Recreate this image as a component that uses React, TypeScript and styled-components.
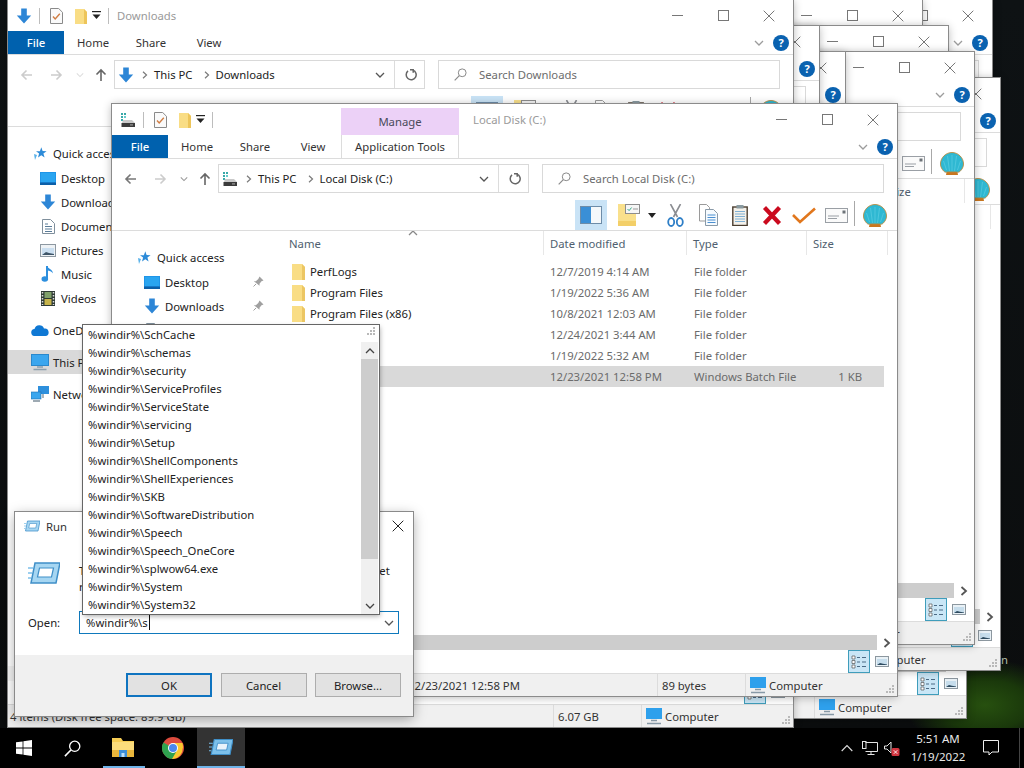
import React from "react";
import styled, { createGlobalStyle } from "styled-components";

const FONT = `"Noto Sans", "Open Sans", sans-serif`;

const Global = createGlobalStyle`
  html, body { margin: 0; padding: 0; background: #0c0e0f; }
  * { box-sizing: border-box; }
  body { font-family: ${FONT}; font-size: 11.3px; color: #222; }
`;

const Screen = styled.div`
  width: 1024px; height: 768px; position: relative; overflow: hidden;
  display: flex; flex-direction: column;
`;
const Wallpaper = styled.div`
  height: 728px; position: relative; overflow: hidden;
  background:
    radial-gradient(ellipse 80px 46px at 985px 705px, #27500f 0%, #1a380b 55%, rgba(12,20,8,0) 100%),
    linear-gradient(#0e1214, #0b0d0e);
`;
const DesktopLabel = styled.span`
  position: absolute; left: 1001px; top: 652px; color: #b9c4b0;
`;

/* ---------- explorer window ---------- */
const Frame = styled.div<{ $x: number; $y: number; $h: number }>`
  position: absolute; left: ${p => p.$x}px; top: ${p => p.$y}px; width: 785px; height: ${p => p.$h}px;
  background: #fff; display: flex; flex-direction: column; overflow: hidden;
`;
const FrameOutline = styled.div<{ $x: number; $y: number; $h: number }>`
  position: absolute; left: ${p => p.$x}px; top: ${p => p.$y}px; width: 785px; height: ${p => p.$h}px;
  box-shadow: 0 0 0 1px #8b8b8b, 0 1px 9px rgba(0,0,0,.32);
`;
const TitleBar = styled.div`
  height: 31px; flex: none; display: flex; align-items: stretch; background: #fff;
`;
const QuickBar = styled.div<{ $wide: boolean }>`
  width: ${p => (p.$wide ? 229 : 109)}px; flex: none; display: flex; align-items: center; position: relative;
`;
const QSlot = styled.span<{ $w: number }>`
  width: ${p => p.$w}px; flex: none; display: flex; justify-content: center; align-items: center;
`;
const QSep = styled.span`
  width: 1px; height: 16px; background: #bdbdbd; flex: none;
`;
const ContextTab = styled.div`
  width: 118px; margin-top: 4px; background: #ecd1f7; color: #4a4a5a; display: flex;
  align-items: center; justify-content: center;
`;
const WinTitle = styled.div<{ $wide: boolean }>`
  color: #9a9a9a; display: flex; align-items: center; margin-left: ${p => (p.$wide ? 14 : 0)}px; flex: 1; padding-bottom: 1px;
`;
const Controls = styled.div`
  display: flex; flex: none; margin-right: 1px;
`;
const Control = styled.span`
  width: 46px; display: flex; align-items: center; justify-content: center;
`;
const TabRow = styled.div`
  height: 24px; flex: none; display: flex; align-items: stretch; border-bottom: 1px solid #dcdcdc; padding-right: 4px;
`;
const FileTab = styled.div`
  width: 56px; background: #0061ae; color: #fff; display: flex; align-items: center; justify-content: center;
  font-weight: 500;
`;
const RibbonTab = styled.div`
  width: 58px; color: #333; display: flex; align-items: center; justify-content: center;
`;
const ToolsTab = styled.div`
  width: 118px; margin-left: -1px; color: #333; display: flex; align-items: center; justify-content: center;
  border-left: 1px solid #dcdcdc; border-right: 1px solid #dcdcdc;
`;
const RibbonEnd = styled.div`
  margin-left: auto; display: flex; align-items: center; gap: 9px;
`;
const Help = styled.span`
  width: 16px; height: 16px; border-radius: 50%; background: #0a62b0; color: #fff; font-weight: 700; font-size: 11px;
  display: flex; align-items: center; justify-content: center; line-height: 1;
`;
const AddressRow = styled.div`
  height: 41px; flex: none; display: flex; align-items: flex-start; padding-top: 5px;
`;
const NavArrows = styled.div`
  width: 106px; height: 29px; flex: none; display: flex; align-items: center;
`;
const ArrowSlot = styled.span<{ $w: number }>`
  width: ${p => p.$w}px; flex: none; display: flex; justify-content: center;
`;
const AddressBox = styled.div`
  width: 311px; height: 29px; flex: none; border: 1px solid #d9d9d9; display: flex; align-items: center; color: #222;
`;
const Crumb = styled.span`
  margin-right: 6px; color: #222;
`;
const CrumbIcon = styled.span`
  width: 21px; display: flex; justify-content: center; flex: none;
`;
const CrumbSep = styled.span<{ $w: number }>`
  width: ${p => p.$w}px; flex: none; display: flex; justify-content: center;
`;
const AddressEnd = styled.div`
  margin-left: auto; display: flex; align-items: stretch; height: 100%;
`;
const Drop = styled.span`
  width: 28px; display: flex; align-items: center; justify-content: center;
`;
const Refresh = styled.span`
  width: 30px; border-left: 1px solid #dcdcdc; display: flex; align-items: center; justify-content: center; padding-left: 2px;
`;
const SearchBox = styled.div`
  width: 342px; height: 29px; margin-left: 13px; flex: none; border: 1px solid #d9d9d9; display: flex; align-items: center;
  color: #6d6d6d; padding-left: 15px; gap: 12px;
`;
const ToolBar = styled.div`
  height: 31px; flex: none; display: flex; align-items: stretch; border-bottom: 1px solid #dcdcdc; padding-left: 463px;
`;
const Tool = styled.span<{ $w?: number; $active?: boolean; $gap?: number }>`
  width: ${p => p.$w ?? 32}px; margin-left: ${p => p.$gap ?? 0}px; flex: none; display: flex; align-items: center; justify-content: center;
  background: ${p => (p.$active ? "#c9e3f6" : "transparent")};
`;
const ToolSep = styled.span`
  width: 1px; margin: 1px 2px 4px 2px; background: #a8a8a8; flex: none;
`;
const Body = styled.div`
  flex: 1; min-height: 0; display: flex; overflow: hidden;
`;
const NavPane = styled.div`
  width: 168px; flex: none; padding-top: 14px; display: flex; flex-direction: column;
`;
const NavRow = styled.div<{ $indent: number; $gap?: number; $on?: boolean }>`
  height: 24px; flex: none; display: flex; align-items: center; position: relative; white-space: nowrap;
  margin-top: ${p => p.$gap ?? 0}px; padding-left: ${p => p.$indent}px; background: ${p => (p.$on ? "#d9d9d9" : "transparent")};
  color: #222;
`;
const NavIcon = styled.span`
  width: 18px; margin-right: 4px; flex: none; display: flex; justify-content: center; align-items: center;
`;
const Pin = styled.span`
  position: absolute; left: 141px; top: 6px; display: flex;
`;
const ListPane = styled.div`
  flex: 1; min-width: 0; display: flex; flex-direction: column;
`;
const HeaderRow = styled.div`
  height: 26px; flex: none; display: grid; grid-template-columns: 264px 143px 120px 81px; position: relative;
  color: #4f5f70; padding-bottom: 2px;
`;
const HeaderCell = styled.div<{ $pad: number }>`
  display: flex; align-items: center; padding-left: ${p => p.$pad}px; border-right: 1px solid #e7e7e7;
`;
const SortCaret = styled.span`
  position: absolute; left: 128px; top: -3px; display: flex;
`;
const Row = styled.div<{ $on?: boolean }>`
  height: 21px; flex: none; display: grid; grid-template-columns: 270px 144px 108px 60px; align-items: center;
  width: 604px; background: ${p => (p.$on ? "#d9d9d9" : "transparent")}; color: #6b6b6b; white-space: nowrap;
`;
const RowName = styled.div`
  display: flex; align-items: center; padding-left: 12px; gap: 5px; color: #222;
`;
const RowSize = styled.div`
  text-align: right;
`;
const Rows = styled.div`
  padding-top: 4px; display: flex; flex-direction: column;
`;
const HScroll = styled.div`
  height: 15px; flex: none; display: flex; background: #f4f4f4; padding-left: 300px;
`;
const HThumb = styled.div`
  flex: 1; background: #cdcdcd;
`;
const HArrow = styled.div`
  width: 20px; display: flex; align-items: center; justify-content: center; background: #fff;
`;
const ViewRow = styled.div`
  height: 23px; flex: none; display: flex; justify-content: flex-end; align-items: stretch; padding-right: 5px; gap: 1px;
`;
const ViewBtn = styled.span<{ $on?: boolean }>`
  width: ${p => (p.$on ? 22 : 21)}px; display: flex; align-items: center; justify-content: center;
  background: ${p => (p.$on ? "#c9e6f6" : "transparent")}; border: ${p => (p.$on ? "1px solid #3f9dbb" : "none")};
`;
const StatusBar = styled.div`
  height: 23px; flex: none; background: #f0f0f0; border-top: 1px solid #dcdcdc; display: flex; position: relative; align-items: center;
`;
const StatusLeft = styled.div<{ $pad: number }>`
  width: 545px; height: 100%; padding-left: ${p => p.$pad}px; display: flex; align-items: center; white-space: nowrap; color: #333;
`;
const StatusSize = styled.div`
  width: 88px; height: 100%; padding-left: 4px; border-left: 1px solid #dcdcdc; display: flex; align-items: center; color: #333;
`;
const StatusZone = styled.div`
  flex: 1; height: 100%; border-left: 1px solid #dcdcdc; padding-left: 4px; display: flex; align-items: center; gap: 3px; color: #333;
`;
const Grip = styled.span`
  position: absolute; right: 2px; bottom: 2px; display: flex;
`;

/* ---------- run dialog ---------- */
const RunFrame = styled.div`
  position: absolute; left: 15px; top: 512px; width: 398px; height: 204px; background: #fff;
  box-shadow: 0 0 0 1px #8a8a8a, 0 3px 12px rgba(0,0,0,.35); display: flex; flex-direction: column;
`;
const RunTitle = styled.div`
  height: 30px; flex: none; display: flex; align-items: center; padding: 0 0 2px 9px; gap: 6px; position: relative; color: #333;
`;
const RunClose = styled.span`
  position: absolute; right: 9px; top: 8px; display: flex;
`;
const RunBody = styled.div`
  height: 113px; flex: none; padding: 19px 14px 0 13px; display: flex; flex-direction: column;
`;
const RunIntro = styled.div`
  height: 50px; flex: none; display: flex; gap: 16px;
`;
const RunText = styled.div`
  line-height: 15.5px; color: #222; white-space: nowrap; padding-top: 2px; margin-left: 3px;
`;
const OpenRow = styled.div`
  display: flex; align-items: center; color: #222;
`;
const OpenLabel = styled.span`
  width: 51px; flex: none; padding-bottom: 1px;
`;
const OpenInput = styled.div`
  width: 320px; height: 23px; border: 1px solid #0f79bc; display: flex; align-items: center; padding-left: 6px; color: #222;
`;
const Caret = styled.span`
  width: 1px; height: 15px; background: #111; margin-left: 1px;
`;
const InputEnd = styled.span`
  margin-left: auto; width: 18px; display: flex; justify-content: center;
`;
const RunFoot = styled.div`
  flex: 1; background: #f0f0f0; display: flex; padding: 18px 12px 0 111px; gap: 8.5px;
`;
const RunButton = styled.div<{ $main?: boolean }>`
  width: 86px; height: 24px; background: #e2e2e2; color: #222;
  border: ${p => (p.$main ? "2px solid #0f74c0" : "1px solid #adadad")};
  display: flex; align-items: center; justify-content: center;
`;

/* ---------- autocomplete list ---------- */
const Suggest = styled.div`
  position: absolute; left: 83px; top: 325px; width: 296px; height: 289px; background: #fff;
  box-shadow: 0 0 0 1px #666, 1px 2px 5px rgba(0,0,0,.35); display: flex; overflow: hidden;
`;
const SuggestList = styled.div`
  flex: 1; padding: 1px 0 0 5px; display: flex; flex-direction: column;
`;
const SuggestItem = styled.div`
  height: 18px; flex: none; line-height: 18px; color: #222; white-space: nowrap;
`;
const VScroll = styled.div`
  width: 17px; flex: none; margin-right: 1px; background: #f0f0f0; display: flex; flex-direction: column;
`;
const VGrip = styled.div`
  height: 17px; flex: none; background: #fff; display: flex; justify-content: flex-end; align-items: flex-start; padding: 1px 2px 0 0;
`;
const VArrow = styled.div`
  height: 17px; flex: none; display: flex; align-items: center; justify-content: center;
`;
const VThumb = styled.div`
  height: 200px; flex: none; background: #cdcdcd;
`;
const VTrack = styled.div`
  flex: 1;
`;

/* ---------- taskbar ---------- */
const Taskbar = styled.div`
  height: 40px; flex: none; background: #000; display: flex; align-items: stretch; position: relative;
`;
const TaskItem = styled.div<{ $w: number; $under?: boolean; $active?: boolean }>`
  width: ${p => p.$w}px; flex: none; display: flex; align-items: center; justify-content: center; position: relative;
  background: ${p => (p.$active ? "#333" : "transparent")};
  border-bottom: ${p => (p.$active ? "2px solid #6fb3e8" : "none")};
  &::after {
    content: ""; display: ${p => (p.$under ? "block" : "none")}; position: absolute; left: 5px; right: 3px; bottom: 0; height: 2px; background: #6fb3e8;
  }
`;
const Tray = styled.div`
  margin-left: auto; display: flex; align-items: stretch;
`;
const TraySlot = styled.div<{ $w: number }>`
  width: ${p => p.$w}px; flex: none; display: flex; align-items: center; justify-content: center;
`;
const Clock = styled.div`
  width: 66px; flex: none; color: #e8e8e8; display: flex; flex-direction: column; align-items: center; justify-content: center;
  line-height: 18px; font-size: 11.5px;
`;
const ShowDesktop = styled.div`
  width: 1px; margin: 0 4px 0 8px; background: #444;
`;

/* ---------- icons ---------- */
const DownloadIco = ({ s = 16 }: { s?: number }) => (
  <svg width={s} height={s} viewBox="0 0 16 16"><path d="M5.2 0.5h5.6v7h4.4L8 15.5.8 7.5h4.4z" fill="#2d86d6" /></svg>
);
const DriveIco = ({ s = 16 }: { s?: number }) => (
  <svg width={s} height={s} viewBox="0 0 16 16">
    <rect x="1" y="1" width="2" height="2" fill="#39a9a9" /><rect x="4" y="1" width="2" height="2" fill="#39a9a9" /><rect x="1" y="4" width="2" height="2" fill="#39a9a9" /><rect x="4" y="4" width="2" height="2" fill="#6cc" /><rect x="1" y="7" width="2" height="2" fill="#39a9a9" />
    <path d="M3 8h9l3 3H2z" fill="#c9c9c9" /><rect x="1.5" y="11" width="13.5" height="4" fill="#3b3b3b" /><rect x="10" y="12.3" width="3" height="1.2" fill="#9a9a9a" />
  </svg>
);
const NotesIco = () => (
  <svg width="13" height="16" viewBox="0 0 13 16">
    <path d="M.5.5h8.2l3.8 3.8v11.2H.5z" fill="#fafafa" stroke="#8a8a8a" /><path d="M3 8.5l2.2 2.4L9.8 5.8" fill="none" stroke="#d07d43" strokeWidth="1.4" />
  </svg>
);
const FolderTall = () => (
  <svg width="13" height="16" viewBox="0 0 13 16">
    <path d="M0 1h9l3 3v12H0z" fill="#f9dd85" /><path d="M9 1l3 3v12H9z" fill="#edc55a" />
  </svg>
);
const QDrop = () => (
  <svg width="9" height="9" viewBox="0 0 9 9"><rect y="0" width="9" height="1.2" fill="#222" /><path d="M0.5 3.5h8L4.5 8z" fill="#222" /></svg>
);
const Chevron = ({ c = "#777", s = 10, up = false }: { c?: string; s?: number; up?: boolean }) => (
  <svg width={s} height={s} viewBox="0 0 10 10"><path d={up ? "M1 7l4-4 4 4" : "M1 3l4 4 4-4"} fill="none" stroke={c} strokeWidth="1.3" /></svg>
);
const CrumbArrow = () => (
  <svg width="6" height="8" viewBox="0 0 6 8"><path d="M1 .8L4.5 4 1 7.2" fill="none" stroke="#7a7a7a" strokeWidth="1.2" /></svg>
);
const MinIco = () => <svg width="11" height="11" viewBox="0 0 11 11"><rect y="5" width="11" height="1" fill="#777" /></svg>;
const MaxIco = () => <svg width="11" height="11" viewBox="0 0 11 11"><rect x=".5" y=".5" width="10" height="10" fill="none" stroke="#777" /></svg>;
const CloseIco = ({ c = "#777" }: { c?: string }) => (
  <svg width="12" height="12" viewBox="0 0 12 12"><path d="M.7.7l10.6 10.6M11.3.7L.7 11.3" stroke={c} strokeWidth="1" fill="none" /></svg>
);
const ArrowIco = ({ dir, c }: { dir: "l" | "r" | "u"; c: string }) => {
  const d = dir === "l" ? "M12 7H2M6.5 2.5L2 7l4.5 4.5" : dir === "r" ? "M2 7h10M7.5 2.5L12 7l-4.5 4.5" : "M7 13V2M2.5 6.5L7 2l4.5 4.5";
  return <svg width="14" height="14" viewBox="0 0 14 14"><path d={d} fill="none" stroke={c} strokeWidth="1.6" /></svg>;
};
const RefreshIco = () => (
  <svg width="12" height="13" viewBox="0 0 12 13"><path d="M4 1.2h3.2v3M7 1.6a5 5 0 1 1-5 .8" fill="none" stroke="#666" strokeWidth="1.5" transform="translate(1 .5)" /></svg>
);
const SearchIco = ({ c = "#8a8a8a", s = 13 }: { c?: string; s?: number }) => (
  <svg width={s} height={s} viewBox="0 0 13 13"><circle cx="8.2" cy="4.8" r="3.9" fill="none" stroke={c} strokeWidth="1" /><path d="M5.3 7.7L.7 12.3" stroke={c} strokeWidth="1.2" /></svg>
);
const PaneIco = () => (
  <svg width="22" height="18" viewBox="0 0 22 18"><rect x=".5" y=".5" width="21" height="17" fill="#f4f8fb" stroke="#6d8ca8" /><rect x="1" y="1" width="10" height="16" fill="#3a8fd6" /></svg>
);
const FolderCheckIco = () => (
  <svg width="22" height="22" viewBox="0 0 22 22"><path d="M0 0h10l8 6v16H0z" fill="#f9e08c" /><path d="M0 17h18v5H0z" fill="#f3cf68" /><rect x="7.5" y=".5" width="14" height="9" fill="#f6f6f6" stroke="#8d8d8d" /><path d="M9.5 5l1.6 1.6L13.6 3.5" stroke="#3a8" fill="none" /><path d="M15 5h5" stroke="#999" /></svg>
);
const ToolDrop = () => <svg width="8" height="5" viewBox="0 0 8 5"><path d="M0 0h8L4 5z" fill="#222" /></svg>;
const ScissorsIco = () => (
  <svg width="17" height="23" viewBox="0 0 17 23">
    <path d="M3.5 0l7 13M13.5 0l-7 13" stroke="#8b8d92" strokeWidth="1.6" fill="none" />
    <ellipse cx="4.2" cy="18" rx="3" ry="4" fill="none" stroke="#2f7fc7" strokeWidth="1.8" /><ellipse cx="12.8" cy="18" rx="3" ry="4" fill="none" stroke="#2f7fc7" strokeWidth="1.8" />
  </svg>
);
const CopyIco = () => (
  <svg width="19" height="22" viewBox="0 0 19 22">
    <path d="M.5.5h7l3 3V17H.5z" fill="#fff" stroke="#9a9a9a" /><path d="M6.5 5.5h8l4 4v12h-12z" fill="#f6fbff" stroke="#8a9aa8" />
    <path d="M8.5 11h8M8.5 13.5h8M8.5 16h8M8.5 18.5h8" stroke="#4b8fd1" />
  </svg>
);
const ClipIco = () => (
  <svg width="16" height="21" viewBox="0 0 16 21">
    <rect x=".8" y="2" width="14.4" height="18.5" fill="#f4f1ea" stroke="#4a3d2f" strokeWidth="1.4" /><rect x="4.5" y="0" width="7" height="3.5" fill="#8a9aa0" />
    <path d="M3 6.5h10M3 9h10M3 11.5h10M3 14h10M3 16.5h10" stroke="#7fb0d4" />
  </svg>
);
const DeleteIco = () => (
  <svg width="20" height="19" viewBox="0 0 20 19"><path d="M2.5 1.5l15 16M17.5 1.5l-15 16" stroke="#cb0a1e" strokeWidth="4.2" fill="none" /></svg>
);
const CheckIco = () => (
  <svg width="24" height="17" viewBox="0 0 24 17"><path d="M1 8l7 7L23 1.5" stroke="#e1771d" strokeWidth="2.6" fill="none" /></svg>
);
const MailIco = () => (
  <svg width="23" height="15" viewBox="0 0 23 15"><rect x=".5" y=".5" width="22" height="14" fill="#fafafa" stroke="#9a9fa5" /><path d="M3 8h11M3 10.5h9" stroke="#9a9fa5" /><rect x="17.5" y="2.5" width="3" height="3" fill="#6d7378" /></svg>
);
const ShellIco = () => (
  <svg width="24" height="23" viewBox="0 0 24 23">
    <path d="M7 18h10l1 5H6z" fill="#c9761f" />
    <path d="M12 .5C6 .5.5 5.500.5 12c0 3.200 1.700 5.500 3.400 7.300 1 1 2.400 1.200 3.800.700h8.600c1.400.500 2.800.300 3.800-.700 1.700-1.800 3.400-4.100 3.400-7.300C23.500 5.500 18 .5 12 .5z" fill="#2fb8d2" stroke="#b98a3e" strokeWidth=".9" />
    <path d="M12 3v16M7.500 4l2 15M16.500 4l-2 15M3.500 9L6.500 18M20.500 9l-3 9" stroke="#56cadf" strokeWidth=".8" />
  </svg>
);
const DesktopIco = () => (
  <svg width="16" height="13" viewBox="0 0 16 13"><rect width="16" height="13" fill="#1f95e8" /><rect y="10.500" width="16" height="2.500" fill="#0c5fa8" /><rect x="1" y="1" width="14" height="9" fill="#2aa5f0" /></svg>
);
const DocIco = () => (
  <svg width="13" height="15" viewBox="0 0 13 15"><path d="M.5.500h8l4 4v10H.5z" fill="#fff" stroke="#7f8f9c" /><path d="M3 5h3M3 7.500h7M3 10h7M3 12.500h7" stroke="#5a7c98" /></svg>
);
const PicIco = () => (
  <svg width="16" height="13" viewBox="0 0 16 13"><rect x=".5" y=".5" width="15" height="12" fill="#eef2f5" stroke="#8d98a1" /><path d="M2 4h12v7H2z" fill="#cbdff0" /><path d="M2 11l4-3 3 1 5 1v1z" fill="#3e5568" /></svg>
);
const MusicIco = () => (
  <svg width="14" height="18" viewBox="0 0 14 18"><path d="M6 1v12" stroke="#2d8fde" strokeWidth="2" /><ellipse cx="3.800" cy="14" rx="3.300" ry="2.800" fill="#2d8fde" /><path d="M6 1c1 3 6 3 6 8 0-2-3-3-5-3.500z" fill="#2d8fde" /></svg>
);
const VideoIco = () => (
  <svg width="14" height="15" viewBox="0 0 14 15"><rect width="14" height="15" fill="#2e3a34" /><rect x="3.500" y="1" width="7" height="6" fill="#7fa06a" /><rect x="3.500" y="8" width="7" height="6" fill="#c5b34a" /><path d="M1.500 1v13M12.500 1v13" stroke="#ddd" strokeWidth="1.500" strokeDasharray="1.500 1.500" /></svg>
);
const CloudIco = () => (
  <svg width="18" height="11" viewBox="0 0 18 11"><path d="M4 11a3.500 3.500 0 0 1-.5-7A5 5 0 0 1 13 3.500 3.800 3.800 0 0 1 14.500 11z" fill="#0f78d4" /></svg>
);
const PcIco = () => (
  <svg width="18" height="17" viewBox="0 0 18 17"><rect x=".5" y=".5" width="17" height="11" fill="#3aa6ee" stroke="#2a88cc" /><path d="M6 13h6M2.500 15.500h13" stroke="#8ba0ae" strokeWidth="1.300" /></svg>
);
const NetIco = () => (
  <svg width="18" height="16" viewBox="0 0 18 16"><rect x="7" y="0" width="11" height="8" fill="#2e8fdc" /><rect y="6" width="10" height="7" fill="#3aa6ee" stroke="#1e6fb0" strokeWidth=".6" /><path d="M2 15h7M12 8v4" stroke="#7f8f9a" strokeWidth="1.300" /></svg>
);
const StarIco = () => (
  <svg width="13" height="13" viewBox="0 0 13 13"><path d="M7.300.3l1.300 3.800 4 .1-3.200 2.400 1.200 3.900L7.300 8.300 4 10.500l1.100-3.900L2 4.200h3.900z" fill="#2d8bd8" /><path d="M0 7l3 1-2 5z" fill="#5ab2ea" /></svg>
);
const PinIco = () => (
  <svg width="11" height="11" viewBox="0 0 11 11"><path d="M6.500.5l4 4-2 .8-2 2.500v2L.8 5.200h2l2.500-2.200z" fill="#a0a0a0" /><path d="M3 8L.5 10.500" stroke="#a0a0a0" /></svg>
);
const FolderIco = () => (
  <svg width="13" height="16" viewBox="0 0 13 16"><path d="M0 0h10l3 3v13H0z" fill="#f9dd85" /><path d="M10 0l3 3v13h-3z" fill="#ecc663" /></svg>
);
const ArrowRightSmall = () => (
  <svg width="8" height="10" viewBox="0 0 8 10"><path d="M1.500 1L6 5l-4.500 4" fill="none" stroke="#555" strokeWidth="1.800" /></svg>
);
const DetailsIco = () => (
  <svg width="16" height="14" viewBox="0 0 16 14"><path d="M1 1h3v3H1zM1 5.500h3v3H1zM1 10h3v3H1z" fill="#fff" stroke="#555" strokeWidth=".7" /><path d="M6 2.500h3M11 2.500h4M6 7h3M11 7h4M6 11.500h3M11 11.500h4" stroke="#4b6a85" /></svg>
);
const LargeIco = () => (
  <svg width="14" height="11" viewBox="0 0 14 11"><rect x=".5" y=".5" width="13" height="10" fill="#e9f1f6" stroke="#8c979f" /><path d="M2 3h10v6H2z" fill="#c6ddec" /><path d="M2 9l3-2 3 .8 4 .6V9z" fill="#2e4b60" /></svg>
);
const GripIco = () => (
  <svg width="10" height="10" viewBox="0 0 10 10" fill="#b9b9b9"><rect x="7" y="1" width="2" height="2" /><rect x="4" y="4" width="2" height="2" /><rect x="7" y="4" width="2" height="2" /><rect x="1" y="7" width="2" height="2" /><rect x="4" y="7" width="2" height="2" /><rect x="7" y="7" width="2" height="2" /></svg>
);
const ComputerIco = () => (
  <svg width="16" height="17" viewBox="0 0 16 17"><rect width="16" height="11" fill="#2ea0ec" /><path d="M5 12.500h6M1 15.500h14" stroke="#8799a6" strokeWidth="1.300" /></svg>
);
const RunIco = ({ s = 16, dark = false }: { s?: number; dark?: boolean }) => (
  <svg width={s} height={s * 0.75} viewBox="0 0 32 24">
    <path d="M7 2h25l-4 20H3z" fill={dark ? "#7cc0ea" : "#a6d6f2"} stroke="#3f8fc8" strokeWidth="1.500" />
    <path d="M11.500 7h14l-2 9h-14z" fill={dark ? "#e8f3fb" : "#fff"} stroke="#3f8fc8" strokeWidth="1.200" />
    <path d="M0 7h5M0 12h4M0 17h3" stroke="#7cc0ea" strokeWidth="1.500" />
  </svg>
);
const WinLogo = () => (
  <svg width="16" height="16" viewBox="0 0 16 16" fill="#fff"><path d="M0 2.300L6.600 1.400V7.600H0zM7.400 1.300L16 0V7.600H7.400zM0 8.400H6.600V14.600L0 13.700zM7.400 8.400H16V16L7.400 14.700z" /></svg>
);
const ExplorerIco = () => (
  <svg width="22" height="20" viewBox="0 0 22 20"><path d="M0 0h9l2 3h11v16H0z" fill="#f6cd55" /><rect y="4" width="22" height="15" fill="#fbdc7c" /><path d="M0 12h22v7H0z" fill="#e9b63c" /><path d="M7 12h8v7H7z" fill="#3e8fd8" /><path d="M9.500 15h3v4h-3z" fill="#bfe0f6" /></svg>
);
const ChromeIco = () => (
  <svg width="22" height="22" viewBox="0 0 22 22">
    <circle cx="11" cy="11" r="11" fill="#dd4b3e" />
    <path d="M11 11L1.470 5.500A11 11 0 0 0 11 22l5.500-9.500z" fill="#2fa24f" />
    <path d="M11 11h9.800A11 11 0 0 1 11 22l-1-.1 5.500-9.400z" fill="#fbc82f" />
    <path d="M11 6h9.400a11 11 0 0 1 .6 5H16z" fill="#fbc82f" />
    <circle cx="11" cy="11" r="5" fill="#fff" /><circle cx="11" cy="11" r="4" fill="#4a88ee" />
  </svg>
);
const TrayUp = () => <svg width="12" height="8" viewBox="0 0 12 8"><path d="M.7 7L6 1.500 11.300 7" fill="none" stroke="#ddd" strokeWidth="1.100" /></svg>;
const TrayNet = () => (
  <svg width="16" height="14" viewBox="0 0 16 14" fill="none" stroke="#e4e4e4"><path d="M3.500 1.500h12v9h-12" /><rect x=".5" y=".5" width="3.500" height="7" /><path d="M9 10.500v2.500M5.500 13.500h7" /></svg>
);
const TraySpeaker = () => (
  <svg width="17" height="15" viewBox="0 0 17 15"><path d="M.5 5h2.500l4-4v11l-4-4H.500z" fill="none" stroke="#e4e4e4" /><rect x="7.500" y="7" width="8" height="8" rx="1.500" fill="#d0353f" /><path d="M9.800 9.300l3.500 3.500M13.300 9.300l-3.500 3.500" stroke="#fff" strokeWidth=".9" /></svg>
);
const TrayNote = () => (
  <svg width="16" height="16" viewBox="0 0 16 16"><path d="M.5.500h15v11.500H9L6 15v-3H.500z" fill="none" stroke="#eee" /></svg>
);

type WinProps = {
  x: number; y: number; h: number; title?: string; kind?: "drive" | "download";
  contextual?: boolean; rows?: boolean; back?: boolean; shortNav?: boolean;
  statusPad?: number; statusText?: string; sizeText?: string;
};

const files = [
  ["PerfLogs", "12/7/2019 4:14 AM", "File folder", ""],
  ["Program Files", "1/19/2022 5:36 AM", "File folder", ""],
  ["Program Files (x86)", "10/8/2021 12:03 AM", "File folder", ""],
  ["", "12/24/2021 3:44 AM", "File folder", ""],
  ["", "1/19/2022 5:32 AM", "File folder", ""],
  ["", "12/23/2021 12:58 PM", "Windows Batch File", "1 KB"],
];

const NavList = ({ short }: { short: boolean }) => (
  <>
    <NavRow $indent={23}><NavIcon><StarIco /></NavIcon>Quick access</NavRow>
    <NavRow $indent={31} $gap={1}><NavIcon><DesktopIco /></NavIcon>Desktop<Pin><PinIco /></Pin></NavRow>
    <NavRow $indent={31}><NavIcon><DownloadIco /></NavIcon>Downloads<Pin><PinIco /></Pin></NavRow>
    {short ? (
      <NavRow $indent={31}><NavIcon><DocIco /></NavIcon></NavRow>
    ) : (
      <>
        <NavRow $indent={31}><NavIcon><DocIco /></NavIcon>Documents<Pin><PinIco /></Pin></NavRow>
        <NavRow $indent={31}><NavIcon><PicIco /></NavIcon>Pictures<Pin><PinIco /></Pin></NavRow>
        <NavRow $indent={31}><NavIcon><MusicIco /></NavIcon>Music</NavRow>
        <NavRow $indent={31}><NavIcon><VideoIco /></NavIcon>Videos</NavRow>
        <NavRow $indent={23} $gap={8}><NavIcon><CloudIco /></NavIcon>OneDrive</NavRow>
        <NavRow $indent={23} $gap={8} $on><NavIcon><PcIco /></NavIcon>This PC</NavRow>
        <NavRow $indent={23} $gap={8}><NavIcon><NetIco /></NavIcon>Network</NavRow>
      </>
    )}
  </>
);

const ExplorerWindow = ({ x, y, h, title = "", kind = "drive", contextual = false, rows = false, back = false, shortNav = false, statusPad = 2, statusText = "", sizeText = "" }: WinProps) => {
  const LocIcon = kind === "drive" ? <DriveIco /> : <DownloadIco />;
  return (
    <>
      <FrameOutline $x={x} $y={y} $h={h} />
      <Frame $x={x} $y={y} $h={h}>
        <TitleBar>
          <QuickBar $wide={contextual}>
            <QSlot $w={31}>{LocIcon}</QSlot>
            <QSep />
            <QSlot $w={33}><NotesIco /></QSlot>
            <QSlot $w={1} />
            <QSlot $w={14}><FolderTall /></QSlot>
            <QSlot $w={17}><QDrop /></QSlot>
            <QSlot $w={3} />
            <QSep />
          </QuickBar>
          {contextual && <ContextTab>Manage</ContextTab>}
          <WinTitle $wide={contextual}>{title}</WinTitle>
          <Controls>
            <Control><MinIco /></Control>
            <Control><MaxIco /></Control>
            <Control><CloseIco /></Control>
          </Controls>
        </TitleBar>
        <TabRow>
          {!back && (
            <>
              <FileTab>File</FileTab>
              <RibbonTab>Home</RibbonTab>
              <RibbonTab>Share</RibbonTab>
              <RibbonTab>View</RibbonTab>
            </>
          )}
          {contextual && <ToolsTab>Application Tools</ToolsTab>}
          <RibbonEnd>
            <Chevron c="#9c9c9c" />
            <Help>?</Help>
          </RibbonEnd>
        </TabRow>
        <AddressRow>
          <NavArrows>
            <ArrowSlot $w={38}><ArrowIco dir="l" c={contextual ? "#777" : "#ccc"} /></ArrowSlot>
            <ArrowSlot $w={20}><ArrowIco dir="r" c="#ccc" /></ArrowSlot>
            <ArrowSlot $w={28}><Chevron c={contextual ? "#999" : "#ddd"} s={8} /></ArrowSlot>
            <ArrowSlot $w={14}><ArrowIco dir="u" c="#666" /></ArrowSlot>
          </NavArrows>
          <AddressBox>
            {!back && (
              <>
                <CrumbIcon>{LocIcon}</CrumbIcon>
                <CrumbSep $w={18}><CrumbArrow /></CrumbSep>
                <Crumb>This PC</Crumb>
                <CrumbSep $w={17}><CrumbArrow /></CrumbSep>
                <Crumb>{title}</Crumb>
              </>
            )}
            <AddressEnd>
              <Drop><Chevron c="#555" /></Drop>
              <Refresh><RefreshIco /></Refresh>
            </AddressEnd>
          </AddressBox>
          <SearchBox>{!back && <><SearchIco />Search {title}</>}</SearchBox>
        </AddressRow>
        <ToolBar>
          <Tool $active><PaneIco /></Tool>
          <Tool $gap={6}><FolderCheckIco /></Tool>
          <Tool $w={14}><ToolDrop /></Tool>
          <Tool><ScissorsIco /></Tool>
          <Tool $gap={1}><CopyIco /></Tool>
          <Tool><ClipIco /></Tool>
          <Tool $w={31}><DeleteIco /></Tool>
          <Tool $gap={1}><CheckIco /></Tool>
          <Tool><MailIco /></Tool>
          <ToolSep />
          <Tool $gap={2} $w={32}><ShellIco /></Tool>
        </ToolBar>
        <Body>
          <NavPane>{!back && <NavList short={shortNav} />}</NavPane>
          <ListPane>
            <HeaderRow>
              <HeaderCell $pad={9}>{!back && "Name"}</HeaderCell>
              <HeaderCell $pad={6}>{!back && "Date modified"}</HeaderCell>
              <HeaderCell $pad={6}>{!back && "Type"}</HeaderCell>
              <HeaderCell $pad={6}>Size</HeaderCell>
              <SortCaret><Chevron c="#888" s={10} up /></SortCaret>
            </HeaderRow>
            {rows && (
              <Rows>
                {files.map((f, i) => (
                  <Row key={f[1]} $on={i === 5}>
                    <RowName>{f[0] && <FolderIco />}{f[0]}</RowName>
                    <div>{f[1]}</div>
                    <div>{f[2]}</div>
                    <RowSize>{f[3]}</RowSize>
                  </Row>
                ))}
              </Rows>
            )}
          </ListPane>
        </Body>
        <HScroll>
          <HThumb />
          <HArrow><ArrowRightSmall /></HArrow>
        </HScroll>
        <ViewRow>
          <ViewBtn $on><DetailsIco /></ViewBtn>
          <ViewBtn><LargeIco /></ViewBtn>
        </ViewRow>
        <StatusBar>
          <StatusLeft $pad={statusPad}>{statusText}</StatusLeft>
          <StatusSize>{sizeText}</StatusSize>
          <StatusZone><ComputerIco />Computer</StatusZone>
          <Grip><GripIco /></Grip>
        </StatusBar>
      </Frame>
    </>
  );
};

const suggestions = [
  "SchCache", "schemas", "security", "ServiceProfiles", "ServiceState", "servicing", "Setup", "ShellComponents",
  "ShellExperiences", "SKB", "SoftwareDistribution", "Speech", "Speech_OneCore", "splwow64.exe", "System", "System32",
];

export default function App() {
  return (
    <Screen>
      <Global />
      <Wallpaper>
        <DesktopLabel>n</DesktopLabel>
        <ExplorerWindow back x={207} y={0} h={592} />
        <ExplorerWindow back x={181} y={126} h={592} />
        <ExplorerWindow back x={215} y={78} h={592} />
        <ExplorerWindow back x={137} y={0} h={592} />
        <ExplorerWindow back x={163} y={26} h={592} />
        <ExplorerWindow back x={189} y={52} h={592} />
        <ExplorerWindow back x={60} y={52} h={592} />
        <ExplorerWindow back x={34} y={26} h={592} />
        <ExplorerWindow x={8} y={0} h={727} title="Downloads" kind="download" statusText="4 items (Disk free space: 89.9 GB)" sizeText="6.07 GB" />
        <ExplorerWindow x={112} y={104} h={592} title="Local Disk (C:)" contextual rows shortNav statusPad={296} statusText="12/23/2021 12:58 PM" sizeText="89 bytes" />

        <RunFrame>
          <RunTitle>
            <RunIco s={16} />Run
            <RunClose><CloseIco c="#222" /></RunClose>
          </RunTitle>
          <RunBody>
            <RunIntro>
              <RunIco s={32} />
              <RunText>Type the name of a program, folder, document, or Internet<br />resource, and Windows will open it for you.</RunText>
            </RunIntro>
            <OpenRow>
              <OpenLabel>Open:</OpenLabel>
              <OpenInput>%windir%\s<Caret /><InputEnd><Chevron c="#555" /></InputEnd></OpenInput>
            </OpenRow>
          </RunBody>
          <RunFoot>
            <RunButton $main>OK</RunButton>
            <RunButton>Cancel</RunButton>
            <RunButton>Browse...</RunButton>
          </RunFoot>
        </RunFrame>

        <Suggest>
          <SuggestList>
            {suggestions.map(s => <SuggestItem key={s}>%windir%\{s}</SuggestItem>)}
          </SuggestList>
          <VScroll>
            <VGrip><GripIco /></VGrip>
            <VArrow><Chevron c="#444" up /></VArrow>
            <VThumb />
            <VTrack />
            <VArrow><Chevron c="#444" /></VArrow>
          </VScroll>
        </Suggest>
      </Wallpaper>
      <Taskbar>
        <TaskItem $w={48}><WinLogo /></TaskItem>
        <TaskItem $w={48}><SearchIco c="#fff" s={17} /></TaskItem>
        <TaskItem $w={2} />
        <TaskItem $w={50} $under><ExplorerIco /></TaskItem>
        <TaskItem $w={49}><ChromeIco /></TaskItem>
        <TaskItem $w={48} $active><RunIco s={24} dark /></TaskItem>
        <Tray>
          <TraySlot $w={24}><TrayUp /></TraySlot>
          <TraySlot $w={22}><TrayNet /></TraySlot>
          <TraySlot $w={22}><TraySpeaker /></TraySlot>
          <TraySlot $w={2} />
          <Clock><span>5:51 AM</span><span>1/19/2022</span></Clock>
          <TraySlot $w={40}><TrayNote /></TraySlot>
          <ShowDesktop />
        </Tray>
      </Taskbar>
    </Screen>
  );
}
